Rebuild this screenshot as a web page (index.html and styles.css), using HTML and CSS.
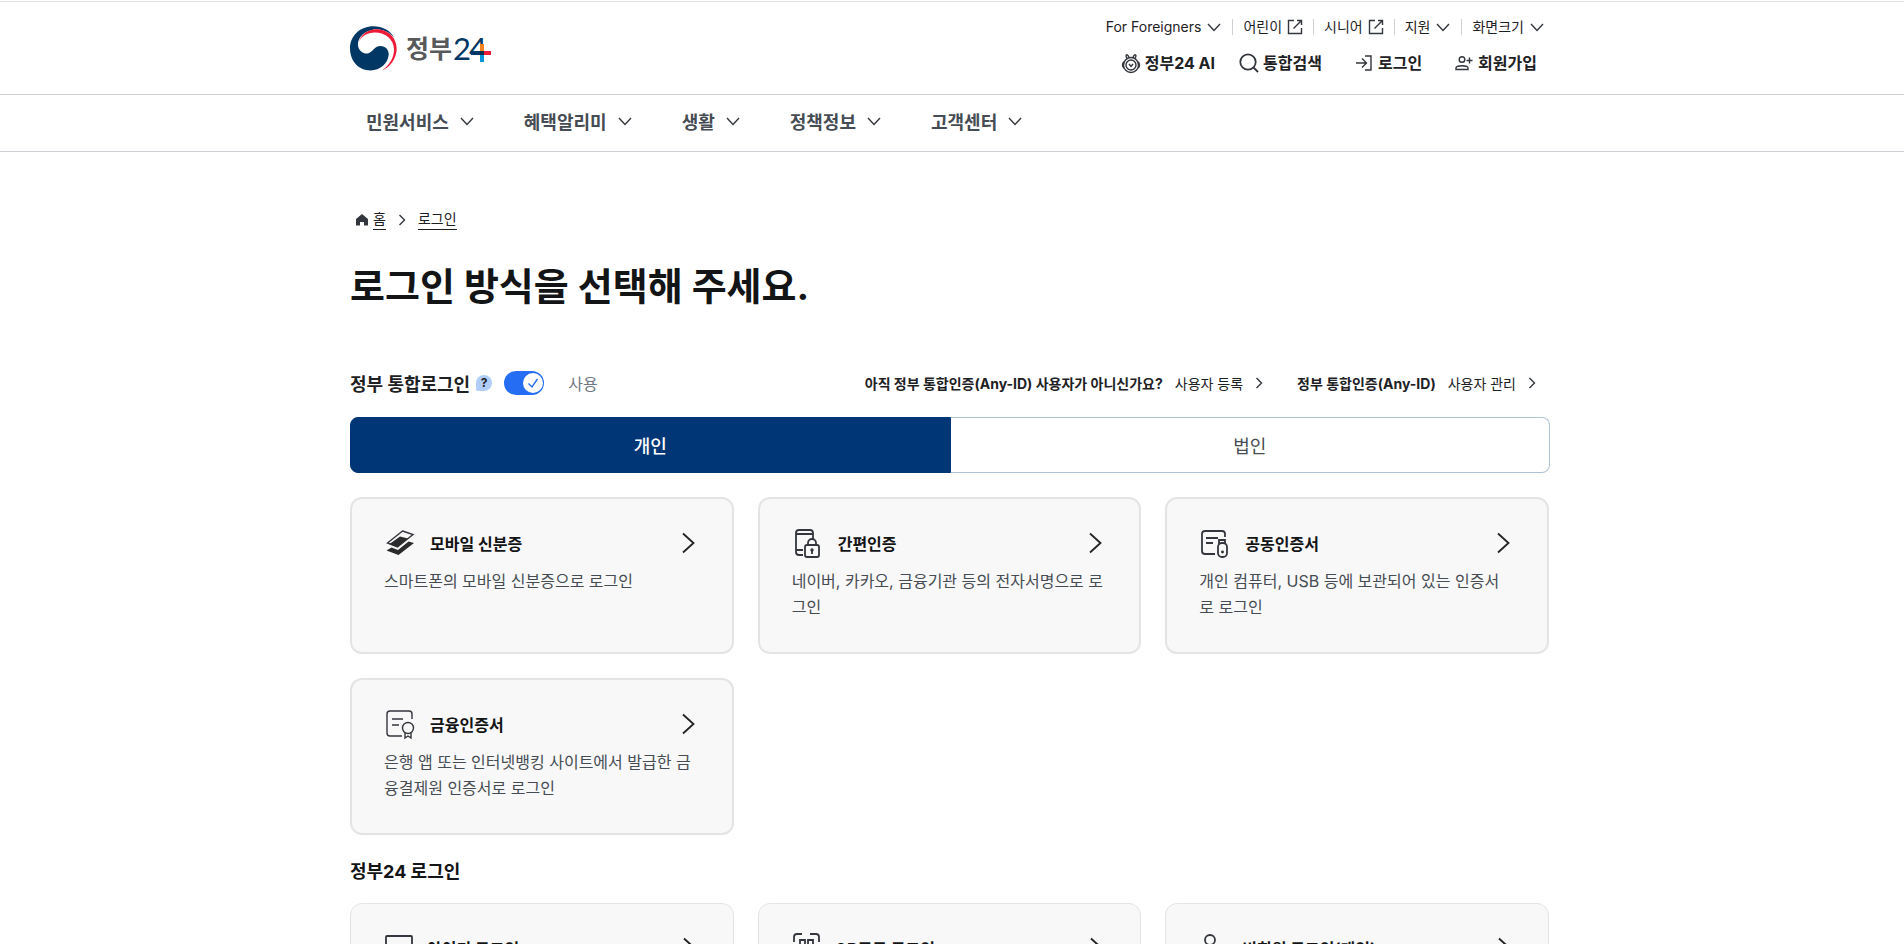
FILE: index.html
```html
<!DOCTYPE html>
<html lang="ko">
<head>
    <meta charset="UTF-8">
    <meta name="viewport" content="width=device-width, initial-scale=1.0">
    <title>로그인 | 정부24</title>
    <link rel="stylesheet" href="styles.css">
</head>
<body>
    <!-- shared icons -->
    <svg class="sprite" width="0" height="0" aria-hidden="true">
        <symbol id="down" viewBox="0 0 16 16"><path d="M2 5l6 6.500l6-6.500"/></symbol>
        <symbol id="right" viewBox="0 0 16 16"><path d="M5.500 3l5 5-5 5"/></symbol>
        <symbol id="go" viewBox="0 0 24 24"><path d="M7 2.500l10.500 9.500-10.500 9.500"/></symbol>
        <symbol id="out" viewBox="0 0 16 16"><path d="M7 1.500H1.500v13h13V9M10 1.500h4.500V6M14.500 1.500L6.500 9.500"/></symbol>
    </svg>

    <header class="header">
        <div class="inner header-top">
            <a class="logo" href="#" aria-label="정부24">
                <svg width="47" height="45" viewBox="0 0 142 135">
                    <path fill="#003764" d="M0 67C0 28 32 0 70 0C98 0 122 12 133 34C118 16 98 9 76 9C46 12 23 32 24 56C25 75 42 85 56 82C69 78 73 60 92 60C108 60 117 72 117 86C115 114 90 134 62 134C25 134 0 105 0 67Z"/>
                    <path fill="#ec1c39" d="M26 48C35 22 55 10 78 9C115 8 142 35 141 70C140 100 120 125 97 134C120 118 133 95 133 70C132 40 108 19 75 19C52 19 35 30 26 48Z"/>
                </svg>
                <span class="logo-name">정부</span>
                <svg width="38" height="40" viewBox="0 -6 38 40">
                    <text class="logo-num" x="-1" y="25">2</text>
                    <text class="logo-num" x="15" y="25">4</text>
                    <rect fill="#003764" x="17" y="16" width="9" height="4"/>
                    <rect fill="#f58220" x="26" y="9" width="4" height="7"/>
                    <rect fill="#0b2a50" x="26" y="16" width="4" height="4"/>
                    <rect fill="#ec1c39" x="30" y="16" width="7" height="4"/>
                    <rect fill="#0095da" x="26" y="20" width="4" height="7"/>
                </svg>
            </a>

            <div class="header-menu">
                <ul class="util">
                    <li><button type="button">For Foreigners <svg><use href="#down"/></svg></button></li>
                    <li><a href="#">어린이 <svg><use href="#out"/></svg></a></li>
                    <li><a href="#">시니어 <svg><use href="#out"/></svg></a></li>
                    <li><button type="button">지원 <svg><use href="#down"/></svg></button></li>
                    <li><button type="button">화면크기 <svg><use href="#down"/></svg></button></li>
                </ul>
                <ul class="quick">
                    <li><button type="button">
                        <svg viewBox="0 0 24 24">
                            <circle cx="12" cy="14" r="7.500"/><circle cx="12" cy="14" r="5"/>
                            <path d="M8 7.500C5.500 3.500 8.500 2 10 6.500M16 7.500C18.500 3.500 15.500 2 14 6.500M5 11c-2 1-2 5 0 6M19 11c2 1 2 5 0 6M10 13l2 2.500 2-2.500"/>
                        </svg>정부24 AI</button></li>
                    <li><button type="button">
                        <svg class="bold" viewBox="0 0 24 24"><circle cx="11" cy="11" r="7.700"/><path d="M16.500 16.500l4.500 4.500"/></svg>통합검색</button></li>
                    <li class="member"><a href="#">
                        <svg viewBox="0 0 24 24"><path d="M4 12h10.500M10 7.500l4.500 4.500-4.500 4.500M13 5h6v14h-6"/></svg>로그인</a></li>
                    <li class="member"><a href="#">
                        <svg viewBox="0 0 24 24"><circle cx="10" cy="8.500" r="2.800"/><path d="M4 18.500v-1.500c0-3 12-3 12 0v1.500zM17.500 6.500v6M14.500 9.500h6"/></svg>회원가입</a></li>
                </ul>
            </div>
        </div>
        <nav class="gnb">
            <ul class="inner">
                <li><button type="button">민원서비스 <svg><use href="#down"/></svg></button></li>
                <li><button type="button">혜택알리미 <svg><use href="#down"/></svg></button></li>
                <li><button type="button">생활 <svg><use href="#down"/></svg></button></li>
                <li><button type="button">정책정보 <svg><use href="#down"/></svg></button></li>
                <li><button type="button">고객센터 <svg><use href="#down"/></svg></button></li>
            </ul>
        </nav>
    </header>

    <main class="inner main">
        <nav class="breadcrumb">
            <svg class="home" viewBox="0 0 12 12"><path d="M6 0L0 5v6.500h4V8h4v3.500h4V5z"/></svg>
            <a href="#">홈</a>
            <svg class="sep"><use href="#right"/></svg>
            <a href="#">로그인</a>
        </nav>

        <h1>로그인 방식을 선택해 주세요.</h1>

        <div class="anyid">
            <label class="anyid-label" for="anyid">정부 통합로그인</label>
            <button type="button" class="help" aria-label="도움말">?</button>
            <span class="switch">
                <input type="checkbox" id="anyid" checked>
                <svg viewBox="0 0 20 20"><path d="M5.500 10.500l3.500 3.500 5.500-8"/></svg>
            </span>
            <span class="state">사용</span>
            <div class="anyid-links">
                <p><strong>아직 정부 통합인증(Any-ID) 사용자가 아니신가요?</strong><a href="#">사용자 등록 <svg><use href="#right"/></svg></a></p>
                <p><strong>정부 통합인증(Any-ID)</strong><a href="#">사용자 관리 <svg><use href="#right"/></svg></a></p>
            </div>
        </div>

        <div class="tabs" role="tablist">
            <button type="button" role="tab" class="active" aria-selected="true">개인</button>
            <button type="button" role="tab" aria-selected="false">법인</button>
        </div>

        <div class="cards">
            <a class="card" href="#">
                <span class="card-head">
                    <svg class="icon thin" viewBox="0 0 36 36">
                        <path d="M18.500 6L29 9.500 13.500 22 3.500 18z"/>
                        <path class="fill" d="M16 11.500l8 2L13.500 22l-8-3z"/>
                        <path class="fill" d="M2.500 25.500l5-3 6.500 2.500 10.500-8.500 5.500 1.500L14.500 30z"/>
                    </svg>
                    <strong>모바일 신분증</strong>
                    <svg class="arrow"><use href="#go"/></svg>
                </span>
                <span class="desc">스마트폰의 모바일 신분증으로 로그인</span>
            </a>
            <a class="card" href="#">
                <span class="card-head">
                    <svg class="icon" viewBox="0 0 36 36">
                        <path d="M11 30H7a3 3 0 0 1-3-3V8a3 3 0 0 1 3-3h11a3 3 0 0 1 3 3v6M4 9h17M4 25h7"/>
                        <rect x="13" y="20" width="14" height="12" rx="2"/>
                        <path d="M16 20v-2a4 4 0 0 1 8 0v2M20 25v4"/><circle cx="20" cy="25" r=".8"/>
                    </svg>
                    <strong>간편인증</strong>
                    <svg class="arrow"><use href="#go"/></svg>
                </span>
                <span class="desc">네이버, 카카오, 금융기관 등의 전자서명으로 로그인</span>
            </a>
            <a class="card" href="#">
                <span class="card-head">
                    <svg class="icon" viewBox="0 0 36 36">
                        <path d="M16 29H6a3 3 0 0 1-3-3V9a3 3 0 0 1 3-3h17a3 3 0 0 1 3 3v3M7 13h12M7 18h7"/>
                        <rect x="19" y="18" width="9" height="14" rx="4"/>
                        <path d="M20 19v-4h6v4"/><circle class="fill" cx="23.500" cy="27" r="1.400"/>
                    </svg>
                    <strong>공동인증서</strong>
                    <svg class="arrow"><use href="#go"/></svg>
                </span>
                <span class="desc">개인 컴퓨터, USB 등에 보관되어 있는 인증서로 로그인</span>
            </a>
            <a class="card" href="#">
                <span class="card-head">
                    <svg class="icon thin" viewBox="0 0 36 36">
                        <path d="M18 30H6a3 3 0 0 1-3-3V8a3 3 0 0 1 3-3h19a3 3 0 0 1 3 3v5M8 13h11M8 19h7"/>
                        <circle cx="24" cy="22" r="5.500"/>
                        <path d="M21 27v5l3-2 3 2v-5"/>
                    </svg>
                    <strong>금융인증서</strong>
                    <svg class="arrow"><use href="#go"/></svg>
                </span>
                <span class="desc">은행 앱 또는 인터넷뱅킹 사이트에서 발급한 금융결제원 인증서로 로그인</span>
            </a>
        </div>

        <h2>정부24 로그인</h2>

        <div class="cards plain">
            <a class="card" href="#">
                <span class="card-head">
                    <svg class="icon" viewBox="0 0 36 36"><rect x="3" y="6" width="26" height="19" rx="1"/><path d="M10 30h12M16 25v5"/></svg>
                    <strong>아이디 로그인</strong>
                    <svg class="arrow"><use href="#go"/></svg>
                </span>
                <span class="desc">아이디와 비밀번호로 로그인</span>
            </a>
            <a class="card" href="#">
                <span class="card-head">
                    <svg class="icon" viewBox="0 0 36 36"><path d="M11 4H6a3 3 0 0 0-3 3v5M19 4h6a3 3 0 0 1 3 3v5M3 21v5a3 3 0 0 0 3 3h5M19 29h6a3 3 0 0 0 3-3v-5"/><path d="M9 10h5v5H9zM17 10h5v5h-5zM9 18h5v5H9zM17 18h5v5h-5z"/></svg>
                    <strong>QR코드 로그인</strong>
                    <svg class="arrow"><use href="#go"/></svg>
                </span>
                <span class="desc">QR코드로 로그인</span>
            </a>
            <a class="card" href="#">
                <span class="card-head">
                    <svg class="icon" viewBox="0 0 36 36"><circle cx="12" cy="10" r="5"/><path d="M3 30v-4c0-9 18-9 18 0v4z"/></svg>
                    <strong>비회원 로그인(개인)</strong>
                    <svg class="arrow"><use href="#go"/></svg>
                </span>
                <span class="desc">회원가입 없이 로그인</span>
            </a>
        </div>
    </main>
</body>
</html>
```
FILE: styles.css
```css
* {
    box-sizing: border-box;
}

body {
    margin: 0;
    background: #fff;
    color: #1e2124;
    font-family: Inter, "Noto Sans CJK KR", sans-serif;
    font-size: 16px;
}

ul, p, h1, h2 {
    margin: 0;
    padding: 0;
    list-style: none;
}

a {
    color: inherit;
    text-decoration: none;
}

button {
    padding: 0;
    border: 0;
    background: none;
    color: inherit;
    font: inherit;
    cursor: pointer;
}

svg {
    flex: none;
    fill: none;
    stroke: #33363d;
    stroke-width: 1.4;
}

.sprite {
    position: absolute;
}

.inner {
    max-width: 1204px;
    margin: 0 auto;
    padding-right: 4px;
}

/* header */
.header {
    margin-top: 1px;
    border-top: 1px solid #e0e3e6;
}

.header-top {
    display: flex;
    justify-content: space-between;
    align-items: flex-start;
    height: 92px;
}

.logo {
    display: flex;
    align-items: center;
    margin-top: 24px;
}

.logo svg {
    stroke: none;
}

.logo-name {
    margin: 0 2px 0 9px;
    color: #58595b;
    font-size: 25px;
    font-weight: 700;
    line-height: 36px;
}

.logo-num {
    fill: #003764;
    font-family: Lato, sans-serif;
    font-size: 31px;
}

.header-menu {
    display: flex;
    flex-direction: column;
    align-items: flex-end;
    gap: 11px;
    padding-top: 13px;
}

.util {
    display: flex;
    padding-right: 5px;
    font-size: 14px;
    line-height: 24px;
}

.util li {
    display: flex;
    align-items: center;
}

.util li + li::before {
    content: "";
    width: 1px;
    height: 16px;
    margin: 0 10px;
    background: #cdd1d5;
}

.util a, .util button {
    display: flex;
    align-items: center;
    gap: 5px;
}

.util svg, .gnb svg {
    width: 16px;
    height: 16px;
}

.quick {
    display: flex;
    gap: 22px;
    padding-right: 13px;
    font-weight: 700;
    line-height: 26px;
}

.quick a, .quick button {
    display: flex;
    align-items: center;
    gap: 2px;
}

.quick svg {
    width: 24px;
    height: 24px;
}

.quick .bold {
    stroke-width: 1.8;
}

.quick .member {
    margin-left: 8px;
}

.gnb {
    border: solid #cdd1d5;
    border-width: 1px 0;
}

.gnb ul {
    display: flex;
    gap: 16px;
}

.gnb button {
    display: flex;
    align-items: center;
    gap: 10px;
    height: 56px;
    padding: 0 17px 4px 16px;
    color: #464c53;
    font-size: 18px;
    font-weight: 700;
}

/* content */
.main {
    padding-top: 57px;
    padding-bottom: 40px;
}

.breadcrumb {
    display: flex;
    align-items: center;
    padding-left: 6px;
    font-size: 14px;
}

.breadcrumb a {
    border-bottom: 1px solid #1e2124;
    line-height: 20px;
}

.breadcrumb .home {
    width: 12px;
    height: 12px;
    margin-right: 5px;
    fill: #33363d;
    stroke: none;
}

.breadcrumb .sep {
    width: 16px;
    height: 16px;
    margin: 0 8px;
}

h1 {
    margin-top: 28px;
    color: #131416;
    font-size: 38px;
    font-weight: 700;
    line-height: 56px;
}

.anyid {
    display: flex;
    align-items: center;
    height: 24px;
    margin-top: 57px;
}

.anyid-label {
    font-size: 18px;
    font-weight: 700;
}

.help {
    width: 16px;
    height: 16px;
    margin: 0 12px 0 6px;
    border-radius: 8px 8px 8px 2px;
    background: #b1cefb;
    color: #1e2124;
    font-size: 12px;
    font-weight: 700;
    line-height: 16px;
}

.switch {
    position: relative;
    width: 40px;
    height: 24px;
}

.switch input {
    width: 40px;
    height: 24px;
    margin: 0;
    border-radius: 12px;
    background: #256ef4;
    appearance: none;
    cursor: pointer;
}

.switch svg {
    position: absolute;
    top: 2px;
    right: 1px;
    width: 20px;
    height: 20px;
    border-radius: 50%;
    background: #fff;
    stroke: #256ef4;
    pointer-events: none;
}

.state {
    margin-left: 24px;
    color: #6d7882;
}

.anyid-links {
    display: flex;
    gap: 30px;
    margin-left: auto;
    padding-right: 10px;
    font-size: 14px;
}

.anyid-links p, .anyid-links a {
    display: flex;
    align-items: center;
}

.anyid-links p {
    gap: 12px;
}

.anyid-links a {
    gap: 8px;
}

.anyid-links svg {
    width: 16px;
    height: 16px;
}

.tabs {
    display: flex;
    margin-top: 22px;
}

.tabs button {
    flex: 1;
    height: 56px;
    border: 1px solid #b1c3d9;
    border-left: 0;
    border-radius: 0 8px 8px 0;
    color: #464c53;
    font-size: 18px;
}

.tabs .active {
    border: 1px solid #003675;
    border-radius: 8px 0 0 8px;
    background: #003675;
    color: #fff;
    font-weight: 500;
}

.cards {
    display: grid;
    grid-template-columns: repeat(3, 1fr);
    gap: 24px;
    margin: 24px 1px 0 0;
}

.card {
    padding: 28px 32px 32px;
    border: 2px solid #e4e4e4;
    border-radius: 12px;
    background: #f8f8f8;
}

.card-head {
    display: flex;
    align-items: center;
    gap: 10px;
    height: 32px;
    margin-bottom: 9px;
    color: #131416;
}

.icon {
    width: 36px;
    height: 36px;
    stroke: #33363d;
    stroke-width: 1.8;
}

.icon.thin {
    stroke-width: 1.4;
}

.icon .fill {
    fill: #2b2b2b;
    stroke: none;
}

.arrow {
    width: 24px;
    height: 24px;
    margin-left: auto;
    stroke: #222;
    stroke-width: 1.8;
}

.desc {
    display: block;
    min-height: 52px;
    padding-right: 2px;
    color: #464c53;
    line-height: 26px;
}

h2 {
    margin-top: 22px;
    color: #131416;
    font-size: 18px;
    font-weight: 700;
    line-height: 30px;
}

.plain {
    margin-top: 16px;
}

.plain .card {
    border-width: 1px;
}

.plain .card-head {
    gap: 8px;
}
```
